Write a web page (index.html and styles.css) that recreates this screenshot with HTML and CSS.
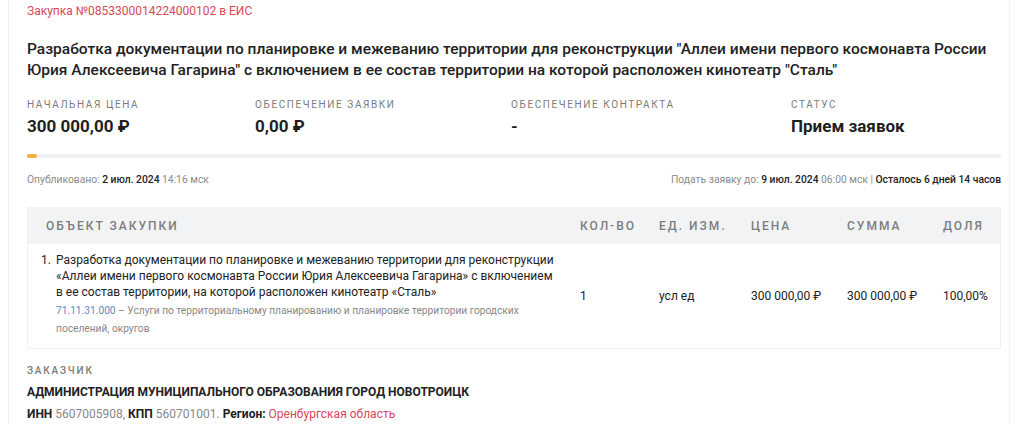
FILE: index.html
```html
<!DOCTYPE html>
<html lang="ru">
<head>
<meta charset="utf-8">
<link rel="stylesheet" href="styles.css">
</head>
<body>
<div class="card">
  <div class="eis">Закупка №0853300014224000102 в ЕИС</div>
  <h1 class="title">Разработка документации по планировке и межеванию территории для реконструкции "Аллеи имени первого космонавта России Юрия Алексеевича Гагарина" с включением в ее состав территории на которой расположен кинотеатр "Сталь"</h1>
  <div class="stats">
    <div class="stat"><div class="label">Начальная цена</div><div class="value">300 000,00 ₽</div></div>
    <div class="stat"><div class="label">Обеспечение заявки</div><div class="value">0,00 ₽</div></div>
    <div class="stat"><div class="label">Обеспечение контракта</div><div class="value">-</div></div>
    <div class="stat"><div class="label">Статус</div><div class="value">Прием заявок</div></div>
  </div>
  <div class="progress"><div class="fill"></div></div>
  <div class="dates">
    <div>Опубликовано: <b>2 июл. 2024</b> 14:16 мск</div>
    <div>Подать заявку до: <b>9 июл. 2024</b> 06:00 мск | <b>Осталось 6 дней 14 часов</b></div>
  </div>
  <div class="table">
    <div class="thead">
      <div class="th first">Объект закупки</div>
      <div class="th">Кол-во</div>
      <div class="th">Ед. изм.</div>
      <div class="th">Цена</div>
      <div class="th">Сумма</div>
      <div class="th">Доля</div>
    </div>
    <div class="trow">
      <div class="td first">
        <div class="item"><span class="num">1.</span><div class="itext">Разработка документации по планировке и межеванию территории для реконструкции «Аллеи имени первого космонавта России Юрия Алексеевича Гагарина» с включением в ее состав территории, на которой расположен кинотеатр «Сталь»<div class="okpd"><span class="code">71.11.31.000</span> – Услуги по территориальному планированию и планировке территории городских поселений, округов</div></div></div>
      </div>
      <div class="td">1</div>
      <div class="td">усл ед</div>
      <div class="td">300 000,00 ₽</div>
      <div class="td">300 000,00 ₽</div>
      <div class="td">100,00%</div>
    </div>
  </div>
  <div class="customer">
    <div class="label">Заказчик</div>
    <div class="cname">Администрация муниципального образования город Новотроицк</div>
    <div class="cinfo"><b>ИНН</b> 5607005908, <b>КПП</b> 560701001. <b>Регион:</b> <span class="region">Оренбургская область</span></div>
  </div>
</div>
</body>
</html>
```

FILE: styles.css
```css
html, body { margin: 0; padding: 0; background: #fff; }
body {
  padding: 0 8px;
  font-family: Roboto, "Noto Sans", Arial, sans-serif;
  color: #222;
  height: 424px;
  overflow: hidden;
}
.card {
  border-left: 1px solid #f2f2f2;
  border-right: 1px solid #f2f2f2;
  width: 1002px;
  padding: 3px 8px 0 18px;
  box-sizing: border-box;
  height: 424px;
}
.eis {
  font-size: 12px;
  color: #d6485a;
  line-height: 16px;
}
.title {
  margin: 20px 0 0;
  font-size: 15.5px;
  font-weight: 500;
  line-height: 21px;
  color: #222;
  padding-right: 8px;
}
.stats {
  display: grid;
  grid-template-columns: 228px 256px 280px 1fr;
  margin-top: 17px;
}
.label {
  font-size: 10px;
  letter-spacing: 1.6px;
  text-transform: uppercase;
  color: #7b7b7b;
  line-height: 14px;
}
.value {
  font-size: 17px;
  font-weight: 700;
  line-height: 22px;
  margin-top: 3px;
  color: #1f1f1f;
}
.progress {
  margin-top: 17px;
  height: 4px;
  background: #eef0f3;
  border-radius: 2px;
}
.fill {
  width: 10px;
  height: 4px;
  background: #f0b43c;
  border-radius: 2px;
}
.dates {
  display: flex;
  justify-content: space-between;
  font-size: 10.3px;
  color: #8a8a8a;
  margin-top: 15px;
  line-height: 14px;
}
.dates b { color: #222; font-weight: 500; }
.table {
  margin-top: 20px;
  border: 1px solid #eef0f2;
  border-top: none;
}
.thead, .trow {
  display: grid;
  grid-template-columns: 542px 79px 92px 96px 96px 1fr;
}
.thead { background: #f2f3f5; height: 37px; align-items: center; }
.th {
  font-size: 12px;
  font-weight: 500;
  letter-spacing: 2px;
  text-transform: uppercase;
  color: #7d7d7d;
  padding-left: 10px;
}
.th.first { padding-left: 18px; }
.trow { align-items: center; }
.td {
  font-size: 12px;
  color: #222;
  padding-left: 10px;
}
.td.first { padding: 8px 0 10px 13px; }
.item { display: flex; line-height: 16px; }
.num { width: 15px; flex: none; }
.itext { flex: 1; padding-right: 12px; }
.okpd {
  font-size: 10.2px;
  color: #888;
  line-height: 18px;
  margin-top: 2px;
}
.code { color: #5a8bbf; }
.customer { margin-top: 15px; }
.customer .label { font-weight: 500; letter-spacing: 1.8px; }
.cname {
  font-size: 12px;
  font-weight: 700;
  text-transform: uppercase;
  margin-top: 6px;
  line-height: 16px;
  color: #222;
}
.cinfo {
  font-size: 12px;
  color: #888;
  margin-top: 6px;
  line-height: 16px;
}
.cinfo b { color: #222; font-weight: 700; }
.region { color: #d6485a; }
```
